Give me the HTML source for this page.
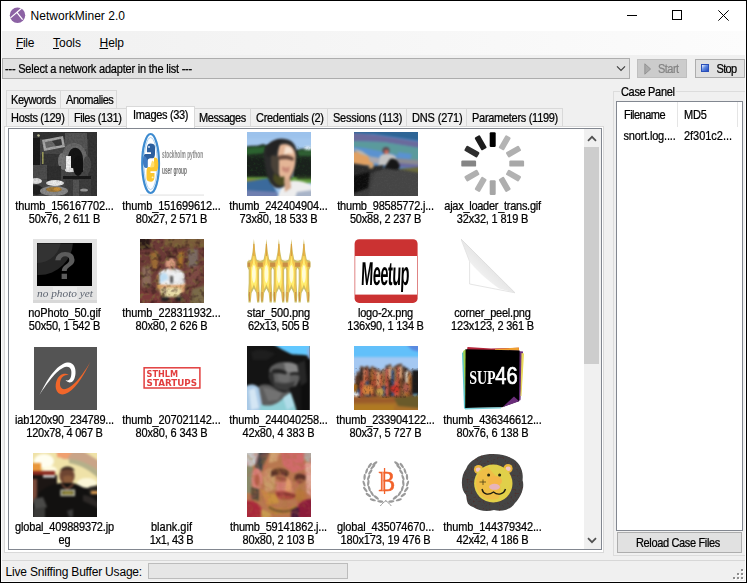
<!DOCTYPE html>
<html lang="en">
<head>
<meta charset="utf-8">
<title>NetworkMiner 2.0</title>
<style>
html,body{margin:0;padding:0;}
body{width:747px;height:583px;overflow:hidden;background:#f0f0f0;position:relative;
  font-family:"Liberation Sans",sans-serif;font-size:11px;color:#000;}
#win{position:absolute;left:0;top:0;width:747px;height:583px;background:#f0f0f0;overflow:hidden;}
.abs{position:absolute;}
.t{position:absolute;white-space:nowrap;line-height:13px;height:13px;}
.ui{font-family:"Liberation Sans",sans-serif;font-size:12px;line-height:14px;height:14px;}
/* frame */
#bt{left:0;top:0;width:747px;height:1px;background:#000;}
#bl{left:0;top:0;width:1px;height:583px;background:#000;}
#br{left:746px;top:0;width:1px;height:583px;background:#000;}
#bb{left:0;top:582px;width:747px;height:1px;background:#000;}
#title{left:1px;top:1px;width:745px;height:30px;background:#fff;}
#menu{left:1px;top:31px;width:745px;height:24px;background:linear-gradient(to right,#f0f0f0,#fcfcfc);}
#combo{left:2px;top:58px;width:626px;height:19px;background:#e1e1e1;border:1px solid #adadad;}
.btn{position:absolute;background:#e1e1e1;border:1px solid #adadad;box-sizing:border-box;}
.tab{position:absolute;box-sizing:border-box;height:18px;background:#f0f0f0;border:1px solid #d9d9d9;border-left:none;border-bottom:none;}
.tab span{position:absolute;left:5px;top:3px;white-space:nowrap;line-height:13px;}
#page{left:4px;top:126px;width:600px;height:427px;background:#fff;border:1px solid #d9d9d9;box-sizing:border-box;}
#lv{left:8px;top:128px;width:594px;height:422px;background:#fff;border:1px solid #828790;box-sizing:border-box;}
.cell{position:absolute;width:107px;height:107px;}
.cell svg{position:absolute;left:21px;top:0;width:64px;height:64px;display:block;}
.cell .l1,.cell .l2{position:absolute;left:-11px;width:127px;text-align:center;white-space:nowrap;line-height:13px;height:13px;}
.cell .l1{top:68px;}
.cell .l2{top:81px;}
.t:not(.ui),.tab span,.cell .l1,.cell .l2{transform:scaleY(1.09);transform-origin:0 10.1px;-webkit-text-stroke:0.22px currentColor;}
#b2{letter-spacing:-0.14px}
#b6{letter-spacing:-0.14px}
#b11{letter-spacing:-0.14px}
#b12{letter-spacing:-0.14px}
#b13{letter-spacing:-0.14px}
#b14{letter-spacing:-0.14px}
#b15{letter-spacing:-0.14px}
#b17{letter-spacing:-0.14px}
#b19{letter-spacing:-0.14px}
#ttl{letter-spacing:0.029px}
#m1{letter-spacing:-0.340px}
#m2{letter-spacing:-0.003px}
#m3{letter-spacing:-0.047px}
#st{letter-spacing:-0.191px}
#cb{letter-spacing:-0.210px}
#bs{letter-spacing:-0.527px}
#bp{letter-spacing:-0.635px}
#seltab{letter-spacing:-0.318px}
#cp{letter-spacing:-0.327px}
#h1{letter-spacing:-0.531px}
#h2{letter-spacing:-0.211px}
#r1{letter-spacing:-0.186px}
#r2{letter-spacing:-0.033px}
#rl{letter-spacing:-0.346px}
#tb0{letter-spacing:-0.450px}
#tb1{letter-spacing:-0.440px}
#tb2{letter-spacing:-0.305px}
#tb3{letter-spacing:-0.415px}
#tb4{letter-spacing:-0.405px}
#tb5{letter-spacing:-0.296px}
#tb6{letter-spacing:-0.247px}
#tb7{letter-spacing:-0.152px}
#tb8{letter-spacing:-0.288px}
#a0{letter-spacing:-0.140px}
#a1{letter-spacing:-0.140px}
#a2{letter-spacing:-0.140px}
#a6{letter-spacing:-0.095px}
#a11{letter-spacing:-0.095px}
#a12{letter-spacing:-0.140px}
#a13{letter-spacing:-0.140px}
#a14{letter-spacing:-0.140px}
#a19{letter-spacing:-0.140px}
#a3{letter-spacing:-0.195px}
#a17{letter-spacing:-0.185px}
#a4{letter-spacing:-0.273px}
#a5{letter-spacing:-0.123px}
#a7{letter-spacing:-0.102px}
#a8{letter-spacing:-0.227px}
#a9{letter-spacing:-0.208px}
#a10{letter-spacing:-0.209px}
#a15{letter-spacing:-0.177px}
#a16{letter-spacing:0.002px}
#a18{letter-spacing:-0.133px}
#b0{letter-spacing:-0.135px}
#b1{letter-spacing:-0.194px}
#b3{letter-spacing:-0.208px}
#b4{letter-spacing:-0.180px}
#b5{letter-spacing:-0.180px}
#b7{letter-spacing:-0.320px}
#b8{letter-spacing:-0.255px}
#b9{letter-spacing:-0.216px}
#b10{letter-spacing:-0.255px}
#b16{letter-spacing:-0.343px}
#b18{letter-spacing:-0.139px}
</style>
</head>
<body>
<div id="win">
  <div id="title" class="abs"></div>
  <svg class="abs" style="left:9px;top:7px" width="17" height="17" viewBox="0 0 17 17">
    <circle cx="8.5" cy="8.25" r="7.7" fill="#8c62a4"/>
    <path d="M12.6 1.3 L1.5 10.9 M7.9 5.3 L13.6 12.7" stroke="#fff" stroke-width="1.25" fill="none"/>
  </svg>
  <div class="t ui" style="left:30.5px;top:9px;" id="ttl">NetworkMiner 2.0</div>
  <!-- window controls -->
  <div class="abs" style="left:627px;top:15px;width:10px;height:1px;background:#000"></div>
  <div class="abs" style="left:672px;top:10px;width:8px;height:8px;border:1px solid #000"></div>
  <svg class="abs" style="left:718px;top:10px" width="11" height="11" viewBox="0 0 11 11"><path d="M0.35 0.35 L10.65 10.65 M10.65 0.35 L0.35 10.65" stroke="#000" stroke-width="1" fill="none"/></svg>

  <div id="menu" class="abs"></div>
  <div class="t ui" style="left:16px;top:36px;" id="m1"><u>F</u>ile</div>
  <div class="t ui" style="left:53px;top:36px;" id="m2"><u>T</u>ools</div>
  <div class="t ui" style="left:99.5px;top:36px;" id="m3"><u>H</u>elp</div>

  <!-- toolbar -->
  <div id="combo" class="abs"></div>
  <div class="t" style="left:5px;top:63px;" id="cb">--- Select a network adapter in the list ---</div>
  <svg class="abs" style="left:616px;top:65px" width="10" height="7" viewBox="0 0 10 7"><path d="M1 1.4 L5 5.5 L9 1.4" stroke="#3c3c3c" stroke-width="1.1" fill="none"/></svg>
  <div class="btn" style="left:637px;top:59px;width:50px;height:19px;background:#cccccc;border-color:#bfbfbf"></div>
  <svg class="abs" style="left:644px;top:63px" width="8" height="12" viewBox="0 0 8 12"><path d="M0.8 0.8 L6.6 6 L0.8 11.2 Z" fill="#a9a9a9" stroke="#8a8a8a" stroke-width="0.8"/></svg>
  <div class="t" style="left:658px;top:63px;color:#838383" id="bs">Start</div>
  <div class="btn" style="left:695px;top:59px;width:50px;height:19px;"></div>
  <div class="abs" style="left:701px;top:64px;width:8px;height:8px;background:linear-gradient(135deg,#e4ecfc 5%,#5f8ae0 45%,#2448c0);border:1px solid #2a4fb8;box-sizing:border-box"></div>
  <div class="t" style="left:716.5px;top:63px;" id="bp">Stop</div>

  <!-- tabs row 1 -->
  <div class="tab" style="left:6px;top:90px;width:55px;border-left:1px solid #d9d9d9"><span id="tb0" style="left:4px">Keywords</span></div>
  <div class="tab" style="left:61px;top:90px;width:56px;"><span id="tb1">Anomalies</span></div>
  <!-- tabs row 2 -->
  <div class="tab" style="left:6px;top:108px;width:63px;border-left:1px solid #d9d9d9"><span id="tb2" style="left:4px">Hosts (129)</span></div>
  <div class="tab" style="left:69px;top:108px;width:58px;"><span id="tb3">Files (131)</span></div>
  <div class="tab" style="left:194px;top:108px;width:57px;"><span id="tb4">Messages</span></div>
  <div class="tab" style="left:251px;top:108px;width:77px;"><span id="tb5">Credentials (2)</span></div>
  <div class="tab" style="left:328px;top:108px;width:79px;"><span id="tb6">Sessions (113)</span></div>
  <div class="tab" style="left:407px;top:108px;width:60px;"><span id="tb7">DNS (271)</span></div>
  <div class="tab" style="left:467px;top:108px;width:96px;"><span id="tb8">Parameters (1199)</span></div>

  <div id="page" class="abs"></div>
  <div class="abs" style="left:126px;top:106px;width:69px;height:22px;background:#fff;border:1px solid #d9d9d9;border-bottom:none;box-sizing:border-box"></div>
  <div class="t" style="left:133px;top:109px;" id="seltab">Images (33)</div>

  <div id="lv" class="abs"></div>

  <!-- CELLS -->
  <div id="cells" class="abs" style="left:0;top:0;width:584px;height:549px;overflow:hidden">
<div class="cell" style="left:12px;top:132px">
<svg viewBox="0 0 64 64" width="64" height="64"><defs><filter color-interpolation-filters="sRGB" id="fb0" x="-10%" y="-10%" width="120%" height="120%"><feGaussianBlur stdDeviation="0.7"/></filter>
<filter color-interpolation-filters="sRGB" id="fn0" x="0" y="0" width="100%" height="100%"><feTurbulence type="fractalNoise" baseFrequency="0.55" numOctaves="2" seed="3" result="t"/><feColorMatrix in="t" type="matrix" values="0 0 0 0 0  0 0 0 0 0  0 0 0 0 0  1.6 0 0 0 -0.55"/></filter>
<clipPath id="fc0"><rect width="64" height="64"/></clipPath></defs>
<g clip-path="url(#fc0)">
<rect width="64" height="64" fill="#474747"/>
<g filter="url(#fb0)">
<rect x="0" y="0" width="64" height="7" fill="#333"/>
<rect x="32" y="1" width="22" height="16" fill="#555"/>
<rect x="55" y="0" width="9" height="64" fill="#353535"/>
<rect x="0" y="6" width="7" height="28" fill="#1c1c1c"/>
<polygon points="9,8 30,4 32,15 11,19" fill="#a8a8a8"/>
<polygon points="12,10 28,7 29,13 13,16" fill="#6a6a6a"/>
<polygon points="19,9 28,7 29,13 23,14" fill="#3a3a3a"/>
<path d="M29 26 C29 6 53 6 54 26 L54 38 L29 38 Z" fill="#6a6a6a"/>
<path d="M35 27 C35 12 49 12 50 27 L50 40 L35 40 Z" fill="#151515"/>
<rect x="8" y="22" width="20" height="12" fill="#363636"/>
<ellipse cx="29" cy="29" rx="4" ry="8" fill="#777"/>
<rect x="33" y="24" width="5" height="13" fill="#f2f2f2"/>
<ellipse cx="37" cy="38" rx="5" ry="2.2" fill="#e8e8e8"/>
<ellipse cx="45" cy="34" rx="5" ry="10" fill="#111"/>
<ellipse cx="54" cy="33" rx="4" ry="9" fill="#4a4a4a"/>
<rect x="14" y="34" width="14" height="16" fill="#303030"/>
<rect x="0" y="33" width="14" height="14" fill="#4e4e4e"/>
<rect x="30" y="44" width="28" height="3" fill="#1a1a1a"/>
<rect x="32" y="47" width="26" height="17" fill="#3e3e3e"/>
<rect x="40" y="48" width="6" height="16" fill="#555"/>
<ellipse cx="3" cy="49" rx="6" ry="3" fill="#e0e0e0"/>
<ellipse cx="3" cy="58" rx="7" ry="5" fill="#222"/>
<ellipse cx="22" cy="51" rx="9" ry="3" fill="#ededed"/>
<ellipse cx="21" cy="59" rx="14" ry="5" fill="#8a8a8a"/>
<ellipse cx="21" cy="57.5" rx="8" ry="2.6" fill="#a07a3a"/>
<ellipse cx="24" cy="57" rx="3.4" ry="1.8" fill="#c8903a"/>
<ellipse cx="51" cy="58" rx="4" ry="1.6" fill="#9a9a9a"/>
<rect x="9" y="20" width="1.6" height="12" fill="#9a9a5a"/>
<circle cx="5.5" cy="3.5" r="1.2" fill="#c8c8a0"/>
</g>
<rect width="64" height="64" fill="#000" filter="url(#fn0)" opacity="0.18"/>
</g></svg>
<div class="l1" id="a0">thumb_156167702...</div><div class="l2" id="b0">50x76, 2 611 B</div></div>
<div class="cell" style="left:119px;top:132px">
<svg viewBox="0 0 64 64" width="64" height="64"><defs><filter color-interpolation-filters="sRGB" id="fb1" x="-10%" y="-10%" width="120%" height="120%"><feGaussianBlur stdDeviation="0.45"/></filter></defs>
<rect width="64" height="64" fill="#fff"/>
<g filter="url(#fb1)">
<ellipse cx="10.6" cy="31.5" rx="8.4" ry="29.5" fill="none" stroke="#3d8bd0" stroke-width="2.2"/>
<ellipse cx="10.6" cy="31.5" rx="6.6" ry="26" fill="none" stroke="#9cc6ea" stroke-width="0.8"/>
<g transform="translate(0,30.6) scale(1,0.87) translate(0,-32)"><path d="M10.5 10 C6.5 10 7 16 7 20 L11 20 L11 22 L5.5 22 C3 22 3 30 3.5 34 C4 38 6 38 7.5 38 L7.5 31 C7.5 28 9 27 10.5 27 L13 27 C14.5 27 15 24 15 21 L15 14 C15 11 13 10 10.5 10 Z" fill="#2b5f9e"/>
<path d="M4 24 C3 28 3 36 5 38 L7.5 38 L7.5 30 C7 27 6 25 4 24Z" fill="#3f7cc4"/>
<path d="M11 54 C15 54 14.5 48 14.5 44 L10.5 44 L10.5 42 L16 42 C18.5 42 18.5 34 18 30 C17.5 26 15.5 26 14 26 L14 32 C14 35 12.5 37 11 37 L8.5 37 C7 37 6.5 40 6.5 43 L6.5 50 C6.5 53 8.5 54 11 54 Z" fill="#fbc730"/>
<path d="M12 30 C14 30 15 33 14 37 L10 38 Z" fill="#ffdf70"/>
<circle cx="9" cy="14" r="1" fill="#dfeaf6"/>
<circle cx="12.6" cy="49" r="1" fill="#fff3c0"/></g>
<rect x="0" y="62.6" width="64" height="0.9" fill="#dcdcdc"/>
</g>
<g fill="#8a8a8a" font-family="Liberation Sans, sans-serif" font-weight="bold" filter="url(#fb1)">
<text transform="translate(22,26) scale(0.77,1.75)" font-size="6.2">stockholm python</text>
<text transform="translate(22,41.5) scale(0.77,1.75)" font-size="6.2" fill="#6e6e6e">user group</text>
</g></svg>
<div class="l1" id="a1">thumb_151699612...</div><div class="l2" id="b1">80x27, 2 571 B</div></div>
<div class="cell" style="left:226px;top:132px">
<svg viewBox="0 0 64 64" width="64" height="64"><defs><filter color-interpolation-filters="sRGB" id="fb2" x="-10%" y="-10%" width="120%" height="120%"><feGaussianBlur stdDeviation="0.8"/></filter>
<clipPath id="fc2"><rect width="64" height="64"/></clipPath>
<filter color-interpolation-filters="sRGB" id="fn2" x="0" y="0" width="100%" height="100%"><feTurbulence type="fractalNoise" baseFrequency="0.45" numOctaves="2" seed="11" result="t"/><feColorMatrix in="t" type="matrix" values="0 0 0 0 0.15  0 0 0 0 0.4  0 0 0 0 0.15  2.4 0 0 0 -1.2"/></filter></defs>
<g clip-path="url(#fc2)">
<rect width="64" height="64" fill="#a3c7ee"/>
<g filter="url(#fb2)">
<rect x="-2" y="-2" width="68" height="8" fill="#9cc2ec"/>
<path d="M-2 15 C4 13 10 15 16 12 C20 14 24 12 28 14 L28 48 L-2 48 Z" fill="#1d2a1f"/>
<path d="M46 20 C50 16 56 18 60 15 C62 16 64 15 66 16 L66 48 L46 48 Z" fill="#1e2b20"/>
<path d="M-2 16 C6 14 12 16 18 14 L18 21 L-2 23Z" fill="#2c6230"/>
<path d="M50 19 C56 17 60 18 66 17 L66 24 L52 24Z" fill="#305e34"/>
<ellipse cx="61" cy="16" rx="4" ry="2" fill="#d8e6f4"/>
<rect x="-2" y="26" width="30" height="20" fill="#181e1a"/>
<rect x="46" y="27" width="20" height="20" fill="#1a211c"/>
<rect x="-2" y="45" width="68" height="6" fill="#5f9a3a"/>
<rect x="-2" y="47" width="24" height="4" fill="#8a8a3a"/>
<rect x="50" y="44" width="16" height="3" fill="#2a3a22"/>
<path d="M-2 50 L22 46 L32 64 L-2 66 Z" fill="#3b6a9c"/>
<path d="M-2 58 L30 60 L30 66 L-2 66Z" fill="#6f7fb0"/>
<path d="M36 52 C44 46 56 48 66 54 L66 66 L30 66 Z" fill="#eeeeee"/>
<path d="M50 60 L66 58 L66 66 L48 66Z" fill="#a8b4c8"/>
</g>
<rect y="14" width="64" height="32" filter="url(#fn2)" opacity="0.3"/>
<g filter="url(#fb2)">
<path d="M17 26 C15 12 28 5 38 7 C48 8 52 18 49 28 C50 36 46 44 42 50 C38 56 30 58 26 54 C20 48 18 36 17 26 Z" fill="#2b2b2b"/>
<path d="M19 24 C18 12 28 6 36 7 C32 12 30 18 27 22 C24 24 22 26 19 24Z" fill="#232323"/>
<path d="M33 13 C42 9 50 17 48.5 27 C48.5 36 45 43 41 48 C37 51 33 47 31.5 40 C30 32 30 20 33 13Z" fill="#e4b596"/>
<path d="M38 15 C42 13 46 16 46 22 C44 21 40 21 37 23Z" fill="#f6e2d0"/>
<path d="M31 24 C37 22 43 23 47 26 L46 29 C42 27 36 27 31 28Z" fill="#6a4a3c"/>
<path d="M35 34 C38 36 41 36 43 34 L42 40 C39 41 37 40 35 38Z" fill="#c98a78"/>
<path d="M24 24 C27 23 30 24 32 26 L32 42 C29 44 26 40 24 34Z" fill="#4a4238"/>
<path d="M27 41 C31 45 35 46 37 44 L38 52 C34 56 28 52 26 47Z" fill="#4a4a22"/>
<path d="M37 48 C40 47 42 46 43 45 L44 56 L38 60 Z" fill="#d4a88c"/>
</g>
</g></svg>
<div class="l1" id="a2">thumb_242404904...</div><div class="l2" id="b2">73x80, 18 533 B</div></div>
<div class="cell" style="left:333px;top:132px">
<svg viewBox="0 0 64 64" width="64" height="64"><defs><filter color-interpolation-filters="sRGB" id="fb3" x="-10%" y="-10%" width="120%" height="120%"><feGaussianBlur stdDeviation="0.8"/></filter>
<clipPath id="fc3"><rect width="64" height="64"/></clipPath>
<filter color-interpolation-filters="sRGB" id="fn3" x="0" y="0" width="100%" height="100%"><feTurbulence type="fractalNoise" baseFrequency="0.6" numOctaves="2" seed="5" result="t"/><feColorMatrix in="t" type="matrix" values="0 0 0 0 0.45  0 0 0 0 0.45  0 0 0 0 0.45  2 0 0 0 -0.9"/></filter></defs>
<g clip-path="url(#fc3)">
<rect width="64" height="64" fill="#3a3a3a"/>
<g filter="url(#fb3)">
<rect x="-2" y="-2" width="68" height="40" fill="#5a8fcb"/>
<path d="M-2 -2 L66 -2 L66 9 L20 2 L-2 1Z" fill="#2e6596"/>
<path d="M-2 1 L22 3 L66 10 L66 16 L30 10 L-2 9Z" fill="#6a6a9c"/>
<path d="M-2 9 L30 10 L66 16 L66 30 L40 22 L10 16 L-2 15Z" fill="#5b9a9c"/>
<path d="M-2 15 L10 16 L30 20 L30 28 L-2 22Z" fill="#5a92d0"/>
<path d="M44 20 L58 22 L56 28 L44 26Z" fill="#5a92d0"/>
<path d="M40 26 L66 28 L66 34 L40 32Z" fill="#8a8a92"/>
<path d="M44 31 L66 33 L66 36 L44 35Z" fill="#6a6aa0"/>
<path d="M-2 20 C6 19 14 22 18 27 L20 34 L-2 32Z" fill="#e0a062"/>
<path d="M-2 16 L8 19 L16 25 L6 22Z" fill="#b8b4b0"/>
<path d="M14 24 L26 26 L24 32 L16 30Z" fill="#a8a8b0"/>
<path d="M-2 31 L22 35 L44 37 L66 36 L66 66 L-2 66 Z" fill="#3c3c3c"/>
<path d="M-2 33 L20 35 L22 40 L-2 44Z" fill="#2a2a2a"/>
<path d="M-2 44 L16 40 L14 56 L-2 62Z" fill="#0c0c0c"/>
<path d="M22 37 L60 39 L66 42 L66 66 L14 66 Z" fill="#454545"/>
<path d="M44 37 L66 35 L66 41Z" fill="#6a6a3a"/>
<circle cx="32" cy="18.5" r="3.6" fill="#5a4a52"/>
<circle cx="32.5" cy="20" r="2.2" fill="#c86a5a"/>
<path d="M26 24 C30 21 38 21 42 25 L42 32 L24 34 Z" fill="#c4c4c4"/>
<path d="M36 27 C40 25 44 28 46 34 L44 38 L30 36 Z" fill="#161616"/>
<path d="M20 34 L30 33 L28 38 L18 40Z" fill="#2a2a2a"/>
<ellipse cx="17" cy="35" rx="2.5" ry="1.5" fill="#c8a070"/>
</g>
<rect y="36" width="64" height="28" filter="url(#fn3)" opacity="0.16"/>
</g></svg>
<div class="l1" id="a3">thumb_98585772.j...</div><div class="l2" id="b3">50x88, 2 237 B</div></div>
<div class="cell" style="left:440px;top:132px">
<svg viewBox="0 0 64 64" width="64" height="64"><defs><filter color-interpolation-filters="sRGB" id="fb4" x="-10%" y="-10%" width="120%" height="120%"><feGaussianBlur stdDeviation="0.55"/></filter></defs>
<g filter="url(#fb4)" transform="translate(31.7,31.6)">
<rect x="-3" y="-31.4" width="6" height="14.8" rx="1.2" fill="#000"/>
<rect x="-3" y="-31.4" width="6" height="14.8" rx="1.2" fill="#b4b4b4" transform="rotate(30)"/>
<rect x="-3" y="-31.4" width="6" height="14.8" rx="1.2" fill="#b0b0b0" transform="rotate(60)"/>
<rect x="-3" y="-31.4" width="6" height="14.8" rx="1.2" fill="#a8a8a8" transform="rotate(90)"/>
<rect x="-3" y="-31.4" width="6" height="14.8" rx="1.2" fill="#b2b2b2" transform="rotate(120)"/>
<rect x="-3" y="-31.4" width="6" height="14.8" rx="1.2" fill="#aeaeae" transform="rotate(150)"/>
<rect x="-3" y="-31.4" width="6" height="14.8" rx="1.2" fill="#a6a6a6" transform="rotate(180)"/>
<rect x="-3" y="-31.4" width="6" height="14.8" rx="1.2" fill="#b2b2b2" transform="rotate(210)"/>
<rect x="-3" y="-31.4" width="6" height="14.8" rx="1.2" fill="#b0b0b0" transform="rotate(240)"/>
<rect x="-3" y="-31.4" width="6" height="14.8" rx="1.2" fill="#858585" transform="rotate(270)"/>
<rect x="-3" y="-31.4" width="6" height="14.8" rx="1.2" fill="#2e2e2e" transform="rotate(300)"/>
<rect x="-3" y="-31.4" width="6" height="14.8" rx="1.2" fill="#1c1c1c" transform="rotate(330)"/>
</g></svg>
<div class="l1" id="a4">ajax_loader_trans.gif</div><div class="l2" id="b4">32x32, 1 819 B</div></div>
<div class="cell" style="left:12px;top:239px">
<svg viewBox="0 0 64 64" width="64" height="64"><defs><filter color-interpolation-filters="sRGB" id="fb5" x="-10%" y="-10%" width="120%" height="120%"><feGaussianBlur stdDeviation="0.5"/></filter>
<clipPath id="fc5"><rect x="4.4" y="4.4" width="54.4" height="42.2"/></clipPath></defs>
<rect width="64" height="64" fill="#e3e3e3"/>
<rect x="0" y="61" width="64" height="3" fill="#d8d8d8"/>
<rect x="20" y="48" width="24" height="13" fill="#ececec"/>
<g filter="url(#fb5)">
<rect x="4" y="4" width="55" height="43" fill="#000"/>
<g clip-path="url(#fc5)"><circle cx="6" cy="2" r="34" fill="#262626"/><circle cx="4" cy="0" r="24" fill="#333"/></g>
<text x="32" y="40" text-anchor="middle" font-family="Liberation Sans, sans-serif" font-weight="bold" font-size="38" fill="#5c5c5c">?</text>
<text x="32" y="57.5" text-anchor="middle" font-family="Liberation Serif, serif" font-style="italic" font-size="9.5" fill="#5d6470" textLength="56" lengthAdjust="spacingAndGlyphs">no photo yet</text>
</g></svg>
<div class="l1" id="a5">noPhoto_50.gif</div><div class="l2" id="b5">50x50, 1 542 B</div></div>
<div class="cell" style="left:119px;top:239px">
<svg viewBox="0 0 64 64" width="64" height="64"><defs><filter color-interpolation-filters="sRGB" id="fb6" x="-10%" y="-10%" width="120%" height="120%"><feGaussianBlur stdDeviation="0.8"/></filter>
<clipPath id="fc6"><rect width="64" height="64"/></clipPath>
<filter color-interpolation-filters="sRGB" id="fn6" x="0" y="0" width="100%" height="100%"><feTurbulence type="fractalNoise" baseFrequency="0.2" numOctaves="2" seed="2" result="t"/><feColorMatrix in="t" type="matrix" values="0 0 0 0 0.48  0 0 0 0 0.42  0 0 0 0 0.22  3.2 0 0 0 -1.55"/></filter>
<filter color-interpolation-filters="sRGB" id="fm6" x="0" y="0" width="100%" height="100%"><feTurbulence type="fractalNoise" baseFrequency="0.18" numOctaves="2" seed="9" result="t"/><feColorMatrix in="t" type="matrix" values="0 0 0 0 0.2  0 0 0 0 0.1  0 0 0 0 0.1  3.2 0 0 0 -1.6"/></filter></defs>
<g clip-path="url(#fc6)">
<rect width="64" height="64" fill="#6b3a37"/>
<g filter="url(#fb6)">
<rect x="-2" y="-2" width="12" height="12" fill="#2a1a18"/>
<rect x="24" y="-2" width="42" height="10" fill="#7a5a3a"/>
<path d="M10 14 L18 12 L18 30 L12 30Z" fill="#9a6a34"/>
<path d="M38 14 L44 12 L42 30 L38 28Z" fill="#a8742c"/>
<rect x="2" y="28" width="9" height="20" fill="#8a6a5a"/>
<rect x="48" y="10" width="10" height="18" fill="#7a6a62"/>
<path d="M46 30 L60 26 L60 44 L48 48Z" fill="#7d4a44"/>
<path d="M0 52 L22 56 L20 66 L0 66Z" fill="#7b3a3a"/>
<path d="M52 50 L66 46 L66 66 L50 66Z" fill="#7a6a4a"/>
<ellipse cx="30.5" cy="25" rx="5.2" ry="6.2" fill="#d89a80"/>
<path d="M25 20 C27 15 34 15 36 20 C33 18 28 18 25 20Z" fill="#2a1a14"/>
<path d="M27 27 C29 29 32 29 34 27 L33 32 L28 32Z" fill="#a85a4a"/>
<path d="M19 34 C24 28 38 28 44 34 L45 46 L18 46 Z" fill="#eef0f2"/>
<path d="M20 36 C24 32 28 34 28 40 L20 44Z" fill="#bcdcf2"/>
<path d="M36 36 C40 34 43 38 42 44 L36 42Z" fill="#cfe4f2"/>
<rect x="30.5" y="37" width="2.2" height="7" fill="#2a2a2a"/>
<path d="M28 28 L31 36 L34 28Z" fill="#c4846a"/>
<path d="M18 44 C24 46 38 46 46 44 L44 54 L20 54Z" fill="#d8a070"/>
<path d="M20 50 C26 48 36 48 42 50 L40 58 L22 58Z" fill="#e8dca8"/>
<ellipse cx="25" cy="60" rx="4" ry="2.4" fill="#222"/><ellipse cx="39" cy="60" rx="4" ry="2.4" fill="#222"/>
<path d="M17 36 L20 36 L20 50 L17 50Z" fill="#c89a50"/>
</g>
<rect width="64" height="64" filter="url(#fn6)" opacity="0.7"/>
<rect width="64" height="64" filter="url(#fm6)" opacity="0.6"/>
<g filter="url(#fb6)">
<path d="M20 35 C24 29 38 29 43 35 L44 45 L19 45 Z" fill="#eef0f2" opacity="0.9"/>
<rect x="30.5" y="37" width="2.2" height="7" fill="#2a2a2a"/>
<path d="M20 36 C24 32 28 34 28 40 L20 44Z" fill="#bcdcf2"/>
</g>
</g></svg>
<div class="l1" id="a6">thumb_228311932...</div><div class="l2" id="b6">80x80, 2 626 B</div></div>
<div class="cell" style="left:226px;top:239px">
<svg viewBox="0 0 64 64" width="64" height="64"><defs><filter color-interpolation-filters="sRGB" id="fb7" x="-10%" y="-10%" width="120%" height="120%"><feGaussianBlur stdDeviation="0.6"/></filter>
<g id="star7">
<polygon points="0,0 1.4,13 2.8,20.5 6.6,22.5 6.6,28 5.2,31 5.2,44 5.9,56 5.4,63.5 3.2,63.5 2.3,54 0,49.5 -2.3,54 -3.2,63.5 -5.4,63.5 -5.9,56 -5.2,44 -5.2,31 -6.6,28 -6.6,22.5 -2.8,20.5 -1.4,13" fill="#cdbf68"/>
<polygon points="0,3 0.9,14 2,21.5 5,24.5 5,27 4.1,31 4.1,44 4.8,56 4.5,61 3.6,61 2.7,51 0,46 -2.7,51 -3.6,61 -4.5,61 -4.8,56 -4.1,44 -4.1,31 -5,27 -5,24.5 -2,21.5 -0.9,14" fill="#f3c64f"/>
<polygon points="0,16 1,24 2.9,29 2.9,44 2,50 0,45 -2,50 -2.9,44 -2.9,29 -1,24" fill="#ffee72"/>
<ellipse cx="0" cy="35" rx="1.9" ry="9" fill="#fffcd8"/>
<rect x="-0.5" y="5" width="1" height="12" fill="#d99a3c"/>
<rect x="-4.9" y="53" width="1.1" height="9" fill="#c98f45"/><rect x="3.8" y="53" width="1.1" height="9" fill="#c98f45"/>
</g></defs>
<g filter="url(#fb7)">
<rect x="1.2" y="22.5" width="61.6" height="6.5" fill="#c98f45"/>
<rect x="1" y="20.8" width="62" height="2" fill="#ecd9b0" opacity="0.8"/>
<use href="#star7" x="6.9" y="0"/><use href="#star7" x="19.4" y="0"/><use href="#star7" x="31.9" y="0"/><use href="#star7" x="44.4" y="0"/><use href="#star7" x="56.9" y="0"/>
<g fill="#c98f45"><rect x="10.6" y="23.6" width="5.2" height="4.2"/><rect x="23.1" y="23.6" width="5.2" height="4.2"/><rect x="35.6" y="23.6" width="5.2" height="4.2"/><rect x="48.1" y="23.6" width="5.2" height="4.2"/><rect x="0.6" y="23.6" width="2.6" height="4.2"/><rect x="60.6" y="23.6" width="2.6" height="4.2"/></g>
</g></svg>
<div class="l1" id="a7">star_500.png</div><div class="l2" id="b7">62x13, 505 B</div></div>
<div class="cell" style="left:333px;top:239px">
<svg viewBox="0 0 64 64" width="64" height="64"><defs><filter color-interpolation-filters="sRGB" id="fb8" x="-10%" y="-10%" width="120%" height="120%"><feGaussianBlur stdDeviation="0.35"/></filter></defs>
<g filter="url(#fb8)">
<rect x="0.6" y="0.3" width="63" height="63.6" rx="4.5" fill="#cb3232"/>
<rect x="1.2" y="17" width="61.8" height="38.6" fill="#fff"/>
<text transform="translate(6.8,46.2) scale(0.83,1.9) skewX(-5)" font-family="Liberation Sans, sans-serif" font-weight="bold" font-size="17.5" fill="#000" letter-spacing="-0.6">Meetup</text>
</g></svg>
<div class="l1" id="a8">logo-2x.png</div><div class="l2" id="b8">136x90, 1 134 B</div></div>
<div class="cell" style="left:440px;top:239px">
<svg viewBox="0 0 64 64" width="64" height="64"><defs><filter color-interpolation-filters="sRGB" id="fb9" x="-10%" y="-10%" width="120%" height="120%"><feGaussianBlur stdDeviation="0.4"/></filter>
<linearGradient id="fg9" x1="0" y1="1" x2="1" y2="0"><stop offset="0.3" stop-color="#f4f4f4"/><stop offset="0.62" stop-color="#dfdfdf"/></linearGradient></defs>
<g filter="url(#fb9)">
<path d="M0 0 L54 53.8 L38 49.5 C26 41 14 30 8.6 22.5 Z" fill="url(#fg9)"/>
<path d="M0 0 L8.6 22.5 L8.6 45 L54 53.8" fill="none" stroke="#e2e2e2" stroke-width="0.9"/>
<path d="M0 0 L54 53.8" fill="none" stroke="#dcdcdc" stroke-width="0.9"/>
</g></svg>
<div class="l1" id="a9">corner_peel.png</div><div class="l2" id="b9">123x123, 2 361 B</div></div>
<div class="cell" style="left:12px;top:346px">
<svg viewBox="0 0 64 64" width="64" height="64"><defs><filter color-interpolation-filters="sRGB" id="fb10" x="-10%" y="-10%" width="120%" height="120%"><feGaussianBlur stdDeviation="0.35"/></filter></defs>
<rect x="1" y="1" width="63" height="63" fill="#545454"/>
<g filter="url(#fb10)">
<path d="M6.5 49 C14 34 23 19 34 16.5 C40 15.5 43 21 42.5 27.5 C42 33.5 39.5 36.8 36.5 36.5 C34.5 36.2 33.5 35 32.5 34 C35 35.2 37 34 38 30.5 C39.2 25 38 20.5 33.5 20.8 C25 22 15 36 6.5 49 Z" fill="#fff"/>
<path d="M57.5 15.5 C52 27 44 41 36 46 C30 50 24.5 49 23 43 C21.8 37 24.5 29.5 30 28 C32.5 27.4 34.5 28.2 35.8 29.2 C32.5 28.6 29 30 27.6 34 C26 39 27.5 44 32.5 43 C41 41 51 27 57.5 15.5 Z" fill="#f1662a"/>
</g></svg>
<div class="l1" id="a10">iab120x90_234789...</div><div class="l2" id="b10">120x78, 4 067 B</div></div>
<div class="cell" style="left:119px;top:346px">
<svg viewBox="0 0 64 64" width="64" height="64"><defs><filter color-interpolation-filters="sRGB" id="fb11" x="-10%" y="-10%" width="120%" height="120%"><feGaussianBlur stdDeviation="0.3"/></filter></defs>
<g filter="url(#fb11)">
<rect x="4.1" y="21.8" width="55.8" height="20.2" fill="#fff" stroke="#e23e3e" stroke-width="1.5"/>
<g font-family="DejaVu Sans, Liberation Sans, sans-serif" font-weight="bold" fill="#e23e3e" font-size="8.4">
<text x="6.6" y="31.4" textLength="31.5" lengthAdjust="spacingAndGlyphs">STHLM</text>
<text x="6.6" y="39.8" textLength="50.5" lengthAdjust="spacingAndGlyphs">STARTUPS</text>
</g></g></svg>
<div class="l1" id="a11">thumb_207021142...</div><div class="l2" id="b11">80x80, 6 343 B</div></div>
<div class="cell" style="left:226px;top:346px">
<svg viewBox="0 0 64 64" width="64" height="64"><defs><filter color-interpolation-filters="sRGB" id="fb12" x="-10%" y="-10%" width="120%" height="120%"><feGaussianBlur stdDeviation="0.9"/></filter>
<clipPath id="fc12"><rect width="63" height="64"/></clipPath></defs>
<g clip-path="url(#fc12)">
<rect width="64" height="64" fill="#141414"/>
<g filter="url(#fb12)">
<path d="M26 -2 L66 -2 L66 12 C58 7 50 10 44 8 C38 5 32 2 26 -2Z" fill="#62c8ff"/>
<path d="M60 2 L66 2 L66 14 L61 12Z" fill="#8ab4e8"/>
<path d="M4 6 C12 2 22 4 28 8 L20 14 L6 14Z" fill="#1e1e1e"/>
<path d="M23 22 C27 15 44 14 51 19 C55 24 54 33 49 40 C44 46 33 46 27 40 C22 35 21 28 23 22Z" fill="#5e5e5e"/>
<path d="M37 17 C44 15 51 18 53 24 L49 27 L39 26Z" fill="#858585"/>
<path d="M30 27 C34 25 40 26 44 28 L42 36 C38 37 34 36 31 34Z" fill="#6c6c6c"/>
<path d="M25 24 C30 22 36 23 40 26 L39 28.5 C34 27 29 27 25 27.5Z" fill="#222"/>
<path d="M43 27 C46 25.5 50 25.5 53 27 L52 29.5 C49 28.6 46 28.6 43 29.5Z" fill="#262626"/>
<path d="M28 36 C34 38 42 38 48 35 L46 42 C40 46 32 45 28 41Z" fill="#3c3c3c"/>
<path d="M22 26 L26 26 L28 40 L24 38Z" fill="#2e2e2e"/>
<path d="M12 40 C18 37 25 39 29 43 C35 47 40 47 43 44 L40 56 L22 62 L12 56 Z" fill="#5c5c5c"/>
<path d="M16 42 C21 41 28 45 35 47 L31 54 L21 55Z" fill="#727272"/>
<path d="M-2 41 C3 37 9 38 12 42 L15 58 L20 66 L-2 66Z" fill="#a9c9e6"/>
<path d="M2 44 L8 42 L12 62 L4 64Z" fill="#d4e6f4"/>
<path d="M14 58 C22 62 32 58 38 50 L46 46 L50 66 L12 66Z" fill="#8fcfd6"/>
<path d="M36 52 L44 46 L47 60 L40 64Z" fill="#b0dce8"/>
<path d="M42 42 C50 38 58 42 60 48 L60 66 L50 66 C48 58 45 50 42 42Z" fill="#161616"/>
<rect x="54" y="14" width="10" height="52" fill="#0e0e0e"/>
<path d="M50 18 L58 14 L60 36 L54 40Z" fill="#262626"/>
</g>
<rect x="62" y="0" width="1" height="64" fill="#777" opacity="0.5"/>
</g></svg>
<div class="l1" id="a12">thumb_244040258...</div><div class="l2" id="b12">42x80, 4 383 B</div></div>
<div class="cell" style="left:333px;top:346px">
<svg viewBox="0 0 64 64" width="64" height="64"><defs><filter color-interpolation-filters="sRGB" id="fb13" x="-10%" y="-10%" width="120%" height="120%"><feGaussianBlur stdDeviation="0.9"/></filter>
<clipPath id="fc13"><rect width="64" height="64"/></clipPath>
<filter color-interpolation-filters="sRGB" id="fo13" x="0" y="0" width="100%" height="100%"><feTurbulence type="fractalNoise" baseFrequency="0.45 0.3" numOctaves="2" seed="8" result="t"/><feColorMatrix in="t" type="matrix" values="0 0 0 0 0.2  0 0 0 0 0.12  0 0 0 0 0.08  2.6 0 0 0 -1.3"/></filter></defs>
<g clip-path="url(#fc13)">
<rect width="64" height="64" fill="#62c0fa"/>
<g filter="url(#fb13)">
<rect x="-2" y="11" width="68" height="24" fill="#a4c8f2"/>
<path d="M52 -2 L66 -2 L66 6 L58 4Z" fill="#5a8ae0"/>
<rect x="-2" y="28" width="6" height="10" fill="#c8dcf4"/>
<rect x="1" y="30" width="58" height="23" fill="#6a4030"/>
<rect x="2.5" y="28.2" width="3.4" height="14.7" fill="#4a3022"/>
<rect x="2.5" y="42.9" width="3.4" height="7.1" fill="#2a4a7a"/>
<circle cx="4.2" cy="26.9" r="1.6" fill="#5a3a2a"/>
<rect x="5.9" y="22.8" width="3.4" height="12.6" fill="#3a2a24"/>
<rect x="5.9" y="35.3" width="3.4" height="14.7" fill="#b84a3a"/>
<circle cx="7.6" cy="21.5" r="1.6" fill="#5a3a2a"/>
<rect x="9.3" y="23.6" width="2.4" height="15.6" fill="#e0784a"/>
<rect x="9.3" y="39.2" width="2.4" height="10.8" fill="#93683c"/>
<circle cx="10.5" cy="22.3" r="1.6" fill="#6a4a38"/>
<rect x="11.7" y="22.7" width="2.8" height="12.4" fill="#a84a30"/>
<rect x="11.7" y="35.1" width="2.8" height="14.9" fill="#2a4a7a"/>
<circle cx="13.1" cy="21.4" r="1.6" fill="#5a3a2a"/>
<rect x="14.5" y="25.1" width="2.4" height="14.6" fill="#5a3a2a"/>
<rect x="14.5" y="39.7" width="2.4" height="10.3" fill="#2a4a7a"/>
<circle cx="15.7" cy="23.8" r="1.6" fill="#40302a"/>
<rect x="16.9" y="22.8" width="2.8" height="12.0" fill="#a8642a"/>
<rect x="16.9" y="34.8" width="2.8" height="15.2" fill="#a84a30"/>
<circle cx="18.3" cy="21.5" r="1.6" fill="#6a4a38"/>
<rect x="19.7" y="24.3" width="3.0" height="16.2" fill="#a84a30"/>
<rect x="19.7" y="40.6" width="3.0" height="9.4" fill="#5a3a2a"/>
<circle cx="21.2" cy="23.0" r="1.6" fill="#5a3a2a"/>
<rect x="22.7" y="25.6" width="3.0" height="14.4" fill="#d8a070"/>
<rect x="22.7" y="40.0" width="3.0" height="10.0" fill="#b84a3a"/>
<circle cx="24.2" cy="24.3" r="1.6" fill="#6a4a38"/>
<rect x="25.7" y="27.4" width="2.4" height="13.3" fill="#c85a3a"/>
<rect x="25.7" y="40.7" width="2.4" height="9.3" fill="#e0784a"/>
<circle cx="26.9" cy="26.1" r="1.6" fill="#6a4a38"/>
<rect x="28.1" y="25.5" width="3.4" height="14.5" fill="#93683c"/>
<rect x="28.1" y="40.0" width="3.4" height="10.0" fill="#2a4a7a"/>
<circle cx="29.8" cy="24.2" r="1.6" fill="#8a6a50"/>
<rect x="31.5" y="22.2" width="3.0" height="14.0" fill="#b84a3a"/>
<rect x="31.5" y="36.2" width="3.0" height="13.8" fill="#d65a4a"/>
<circle cx="33.0" cy="20.9" r="1.6" fill="#3a2a22"/>
<rect x="34.5" y="21.0" width="2.8" height="12.1" fill="#d8a070"/>
<rect x="34.5" y="33.1" width="2.8" height="16.9" fill="#4a3022"/>
<circle cx="35.9" cy="19.7" r="1.6" fill="#6a4a38"/>
<rect x="37.3" y="23.9" width="2.8" height="14.7" fill="#2a4a7a"/>
<rect x="37.3" y="38.5" width="2.8" height="11.5" fill="#2a4a7a"/>
<circle cx="38.7" cy="22.6" r="1.6" fill="#8a6a50"/>
<rect x="40.1" y="22.3" width="2.8" height="12.7" fill="#93683c"/>
<rect x="40.1" y="35.0" width="2.8" height="15.0" fill="#d65a4a"/>
<circle cx="41.5" cy="21.0" r="1.6" fill="#5a3a2a"/>
<rect x="42.9" y="21.0" width="2.4" height="18.0" fill="#b84a3a"/>
<rect x="42.9" y="39.0" width="2.4" height="11.0" fill="#c85a3a"/>
<circle cx="44.1" cy="19.7" r="1.6" fill="#5a3a2a"/>
<rect x="45.3" y="20.3" width="2.8" height="12.3" fill="#d8a070"/>
<rect x="45.3" y="32.5" width="2.8" height="17.5" fill="#7a4a2a"/>
<circle cx="46.7" cy="19.0" r="1.6" fill="#5a3a2a"/>
<rect x="48.1" y="23.0" width="3.4" height="17.0" fill="#5a3a2a"/>
<rect x="48.1" y="40.0" width="3.4" height="10.0" fill="#93683c"/>
<circle cx="49.8" cy="21.7" r="1.6" fill="#3a2a22"/>
<rect x="51.5" y="24.7" width="2.4" height="12.1" fill="#e0d8c8"/>
<rect x="51.5" y="36.8" width="2.4" height="13.2" fill="#c8742a"/>
<circle cx="52.7" cy="23.4" r="1.6" fill="#2a2220"/>
<rect x="53.9" y="26.8" width="3.4" height="17.0" fill="#a8642a"/>
<rect x="53.9" y="43.7" width="3.4" height="6.3" fill="#7a4a2a"/>
<circle cx="55.6" cy="25.5" r="1.6" fill="#6a4a38"/>
<rect x="58" y="24" width="8" height="24" fill="#1a1a1a"/>
<ellipse cx="41" cy="43" rx="4.5" ry="4" fill="#c8342a"/>
<ellipse cx="14" cy="44" rx="6" ry="5" fill="#d0803a"/>
<ellipse cx="26" cy="46" rx="4" ry="4" fill="#c09a4a"/>
<ellipse cx="52" cy="42" rx="3.5" ry="5" fill="#a85a4a"/>
<ellipse cx="2" cy="50" rx="3" ry="4" fill="#e8e8e8"/>
<rect x="-2" y="51" width="68" height="15" fill="#a8702a"/>
<path d="M-2 50 L30 53 L66 49 L66 56 L-2 57Z" fill="#9a5a2a"/>
<path d="M40 52 L66 49 L66 62 L44 60Z" fill="#6a5a2a"/>
<path d="M-2 59 L40 59 L40 66 L-2 66Z" fill="#b07a22"/>
<rect x="-2" y="38" width="5" height="8" fill="#a86a1a"/>
</g>
<rect y="22" width="64" height="30" filter="url(#fo13)" opacity="0.55"/>
</g></svg>
<div class="l1" id="a13">thumb_233904122...</div><div class="l2" id="b13">80x37, 5 727 B</div></div>
<div class="cell" style="left:440px;top:346px">
<svg viewBox="0 0 64 64" width="64" height="64"><defs><filter color-interpolation-filters="sRGB" id="fb14" x="-10%" y="-10%" width="120%" height="120%"><feGaussianBlur stdDeviation="0.35"/></filter></defs>
<g filter="url(#fb14)">
<polygon points="1,7 5,4 5,62 4,63 3,62" fill="#5cc6d0"/>
<polygon points="2.2,5 5,3 6,60 4.5,61" fill="#9fcf4a"/>
<polygon points="6.5,1 30,2.5 58,1.8 58,4.5 6,4" fill="#b4243a"/>
<polygon points="34,3 57.8,1.6 58,4.5 34,4" fill="#f0a030"/>
<polygon points="57,5 62,5.5 59.5,54 56,56" fill="#6a2d7a"/>
<polygon points="60.5,7 63,7.5 60.5,50 59.5,50" fill="#e8d85a"/>
<polygon points="4.6,3.2 58.6,4.4 58,55 41,61.2 4.2,62" fill="#000"/>
<polygon points="41.5,61.2 53,50.5 58.2,55.2" fill="#6a2d7a"/>
<polygon points="4,62 40,61.2 40,62.6 4,63.6" fill="#5cc6d0" opacity="0.8"/>
<text x="8.2" y="37.6" font-family="Liberation Serif, serif" font-weight="bold" font-size="19" fill="#fff" textLength="26.5" lengthAdjust="spacingAndGlyphs">SUP</text>
<text transform="translate(34.2,37.6) scale(0.84,1)" font-family="Liberation Sans, sans-serif" font-size="24" fill="#fff" stroke="#fff" stroke-width="0.7">46</text>
</g></svg>
<div class="l1" id="a14">thumb_436346612...</div><div class="l2" id="b14">80x76, 6 138 B</div></div>
<div class="cell" style="left:12px;top:453px">
<svg viewBox="0 0 64 64" width="64" height="64"><defs><filter color-interpolation-filters="sRGB" id="fb15" x="-10%" y="-10%" width="120%" height="120%"><feGaussianBlur stdDeviation="0.9"/></filter>
<clipPath id="fc15"><rect width="64" height="64"/></clipPath></defs>
<g clip-path="url(#fc15)">
<rect width="64" height="64" fill="#161412"/>
<g filter="url(#fb15)">
<rect x="-2" y="-2" width="68" height="36" fill="#efe2a8"/>
<path d="M22 -2 L50 -2 L66 8 L66 18 C56 12 44 6 30 6Z" fill="#c9a488"/>
<path d="M36 6 C46 6 58 12 66 18 L66 26 C58 18 48 12 36 10Z" fill="#b4b08a"/>
<path d="M24 -2 L40 -2 L34 6 L24 4Z" fill="#f0a070"/>
<ellipse cx="11" cy="8" rx="10" ry="7" fill="#fffef0"/>
<ellipse cx="17" cy="17" rx="7" ry="4" fill="#fffbe0"/>
<ellipse cx="54" cy="30" rx="10" ry="5" fill="#fbf6d8"/>
<rect x="-2" y="10" width="10" height="10" fill="#e8963a"/>
<rect x="-2" y="18" width="24" height="6" fill="#8a2a1e"/>
<rect x="-2" y="22" width="26" height="18" fill="#1c1614"/>
<rect x="10" y="22" width="12" height="2.5" fill="#d8d8d8"/>
<rect x="-2" y="26" width="6" height="24" fill="#7a4a3a"/>
<path d="M56 34 L66 32 L66 42 L56 42Z" fill="#2a2622"/>
<path d="M58 38 L66 38 L66 41 L58 41Z" fill="#d89a50"/>
<ellipse cx="34" cy="23" rx="7.6" ry="9" fill="#6e4532"/>
<path d="M27 18 C29 12 40 12 42 18 C38 16 31 16 27 18Z" fill="#3a2a22"/>
<path d="M30 24 C33 22 37 22 40 24 L39 30 C36 33 33 33 31 30Z" fill="#8a5a3a"/>
<path d="M8 38 C16 32 24 30 30 30 L40 30 C48 32 56 38 60 46 L66 50 L66 66 L-2 66 L-2 52 Z" fill="#121110"/>
<path d="M28 30 L34 35 L41 30 L40 33 L34 37 L29 33Z" fill="#7a4a38"/>
<rect x="27.5" y="36.5" width="14.5" height="6.6" fill="#c8c8b4"/>
<rect x="29" y="38" width="11.5" height="3.6" fill="#5a5420"/>
<rect x="30.5" y="39" width="8.5" height="1.6" fill="#a89a40"/>
<path d="M0 46 L10 44 L14 54 L2 60Z" fill="#4a4a48"/>
<path d="M0 56 L12 54 L12 66 L0 66Z" fill="#3a3a38"/>
<path d="M50 42 C56 42 62 46 66 50 L66 56 C60 52 54 50 50 48Z" fill="#2c2826"/>
<path d="M34 58 L40 56 L40 64 L36 64Z" fill="#3a3a3a"/>
</g>
</g></svg>
<div class="l1" id="a15">global_409889372.jp</div><div class="l2" id="b15">eg</div></div>
<div class="cell" style="left:119px;top:453px">
<svg viewBox="0 0 64 64" width="64" height="64"></svg>
<div class="l1" id="a16">blank.gif</div><div class="l2" id="b16">1x1, 43 B</div></div>
<div class="cell" style="left:226px;top:453px">
<svg viewBox="0 0 64 64" width="64" height="64"><defs><filter color-interpolation-filters="sRGB" id="fb17" x="-10%" y="-10%" width="120%" height="120%"><feGaussianBlur stdDeviation="1.0"/></filter>
<clipPath id="fc17"><rect width="64" height="64"/></clipPath>
<filter color-interpolation-filters="sRGB" id="fn17" x="0" y="0" width="100%" height="100%"><feTurbulence type="fractalNoise" baseFrequency="0.13" numOctaves="2" seed="6" result="t"/><feColorMatrix in="t" type="matrix" values="0 0 0 0 0.78  0 0 0 0 0.36  0 0 0 0 0.36  3 0 0 0 -1.4"/></filter>
<filter color-interpolation-filters="sRGB" id="fo17" x="0" y="0" width="100%" height="100%"><feTurbulence type="fractalNoise" baseFrequency="0.14" numOctaves="2" seed="12" result="t"/><feColorMatrix in="t" type="matrix" values="0 0 0 0 0.62  0 0 0 0 0.45  0 0 0 0 0.2  3 0 0 0 -1.45"/></filter></defs>
<g clip-path="url(#fc17)">
<rect width="64" height="64" fill="#b87850"/>
<g filter="url(#fb17)">
<path d="M-2 -2 L14 -2 L10 10 L4 14 L-2 12Z" fill="#c6c6c6"/>
<path d="M12 -2 L24 -2 C18 6 16 14 14 20 L8 14 Z" fill="#454545"/>
<path d="M-2 12 L6 14 L4 40 L-2 40Z" fill="#8a8a6a"/>
<path d="M22 -2 L34 -2 L30 8 L22 10Z" fill="#cfa070"/>
<path d="M34 -2 L56 -2 L58 16 L46 20 L36 12Z" fill="#d06a6a"/>
<path d="M56 -2 L66 -2 L66 10 L58 8Z" fill="#b0a8a0"/>
<path d="M58 10 L66 10 L66 44 L60 40Z" fill="#e0a898"/>
<ellipse cx="10" cy="26" rx="5.5" ry="11" fill="#d8847a"/>
<ellipse cx="10" cy="27" rx="2.6" ry="6" fill="#b85a4a"/>
<path d="M4 34 L12 36 L12 48 L4 46Z" fill="#5a4a3a"/>
<path d="M16 20 C20 14 26 14 28 20 L28 36 L18 40Z" fill="#c89a68"/>
<path d="M24 18 C30 14 40 15 42 20 L40 24 C34 20 28 22 24 24Z" fill="#5a3228"/>
<path d="M48 22 C52 20 56 20 59 23 L58 28 C54 25 50 26 47 28Z" fill="#5e3228"/>
<path d="M28 24 C32 22 38 24 40 27 L34 28Z" fill="#8a4a3a"/>
<path d="M48 27 C52 26 55 27 57 29 L52 31Z" fill="#8a4a3a"/>
<path d="M28 28 C34 30 40 30 44 26 L46 40 L30 40Z" fill="#d08070"/>
<path d="M40 24 C44 28 46 34 44 40 L38 38Z" fill="#e09a6a"/>
<path d="M14 36 C20 40 26 42 30 40 L32 50 L20 52Z" fill="#c89040"/>
<path d="M28 39 C36 36 46 40 52 43 C46 47 36 48 30 44Z" fill="#a8443c"/>
<path d="M30 41 C36 40 44 42 50 43.5" stroke="#5a2a22" stroke-width="1" fill="none"/>
<path d="M50 36 C56 36 60 40 60 46 L52 52 L48 44Z" fill="#b8783a"/>
<path d="M18 50 C26 56 38 58 50 52 L46 60 L26 62Z" fill="#b8823a"/>
<path d="M22 54 C30 60 42 60 50 54" stroke="#4a3a2a" stroke-width="1.4" fill="none"/>
<path d="M-2 48 C6 46 12 50 16 58 L18 66 L-2 66Z" fill="#a8283a"/>
<path d="M52 50 C58 46 62 46 66 46 L66 66 L48 66 C50 60 50 54 52 50Z" fill="#8a1c3a"/>
<path d="M14 56 L24 60 L26 66 L14 66Z" fill="#c89a50"/>
<path d="M44 58 L52 54 L52 66 L44 66Z" fill="#4a1a3a"/>
</g>
<rect width="64" height="64" filter="url(#fn17)" opacity="0.3"/>
<rect width="64" height="64" filter="url(#fo17)" opacity="0.3"/>
</g></svg>
<div class="l1" id="a17">thumb_59141862.j...</div><div class="l2" id="b17">80x80, 2 103 B</div></div>
<div class="cell" style="left:333px;top:453px">
<svg viewBox="0 0 64 64" width="64" height="64"><defs><filter color-interpolation-filters="sRGB" id="fb18" x="-10%" y="-10%" width="120%" height="120%"><feGaussianBlur stdDeviation="0.35"/></filter>
<g id="lf18"><ellipse cx="0" cy="0" rx="3.2" ry="1.15" fill="#9a9a9a"/></g>
<g id="half18">
<use href="#lf18" transform="translate(-5.5,48.5) rotate(8)"/>
<use href="#lf18" transform="translate(-9.5,44.5) rotate(40)"/>
<use href="#lf18" transform="translate(-13,46.8) rotate(15)"/>
<use href="#lf18" transform="translate(-13.8,40.5) rotate(58)"/>
<use href="#lf18" transform="translate(-17.5,42) rotate(35)"/>
<use href="#lf18" transform="translate(-16.5,35.5) rotate(75)"/>
<use href="#lf18" transform="translate(-20.5,36.5) rotate(52)"/>
<use href="#lf18" transform="translate(-17.5,30) rotate(95)"/>
<use href="#lf18" transform="translate(-21.8,30.5) rotate(72)"/>
<use href="#lf18" transform="translate(-17.2,24.5) rotate(112)"/>
<use href="#lf18" transform="translate(-21.2,24) rotate(92)"/>
<use href="#lf18" transform="translate(-15.5,19) rotate(125)"/>
<use href="#lf18" transform="translate(-19.2,18) rotate(108)"/>
<use href="#lf18" transform="translate(-13,14) rotate(135)"/>
<use href="#lf18" transform="translate(-16,12.5) rotate(125)"/>
<use href="#lf18" transform="translate(-11,10.5) rotate(140)"/>
<path d="M-0.5 47.5 C2 49 4 51 5.5 53" stroke="#9a9a9a" stroke-width="1" fill="none"/>
</g></defs>
<g filter="url(#fb18)">
<use href="#half18" transform="translate(31.8,0)"/>
<use href="#half18" transform="translate(31.8,0) scale(-1,1)"/>
<text x="24.2" y="37.8" font-family="Liberation Serif, serif" font-size="29" fill="#f2622a" stroke="#f2622a" stroke-width="0.5" textLength="17" lengthAdjust="spacingAndGlyphs">B</text>
<rect x="29.9" y="15" width="1.3" height="26" fill="#f2622a"/>
<rect x="28.6" y="18.5" width="0.6" height="19" fill="#fff"/>
</g></svg>
<div class="l1" id="a18">global_435074670...</div><div class="l2" id="b18">180x173, 19 476 B</div></div>
<div class="cell" style="left:440px;top:453px">
<svg viewBox="0 0 64 64" width="64" height="64"><defs><filter color-interpolation-filters="sRGB" id="fb19" x="-10%" y="-10%" width="120%" height="120%"><feGaussianBlur stdDeviation="0.6"/></filter>
<filter color-interpolation-filters="sRGB" id="fn19" x="0" y="0" width="100%" height="100%"><feTurbulence type="fractalNoise" baseFrequency="0.5" numOctaves="2" seed="7" result="t"/><feColorMatrix in="t" type="matrix" values="0 0 0 0 0.35  0 0 0 0 0.12  0 0 0 0 0.1  2.2 0 0 0 -1.22"/><feComposite in2="SourceGraphic" operator="in"/></filter></defs>
<g filter="url(#fb19)">
<path d="M14 6 C20 0 40 -1 50 5 C58 8 63 18 61.5 27 C64 34 60 44 54 50 C50 57 40 59 33 57 C26 59 18 58 12 54 C5 52 6 46 5 42 C-1 36 0 22 5 16 C7 11 10 8 14 6 Z" fill="#444"/>
<path d="M14 6 C20 0 40 -1 50 5 C58 8 63 18 61.5 27 C64 34 60 44 54 50 C50 57 40 59 33 57 C26 59 18 58 12 54 C5 52 6 46 5 42 C-1 36 0 22 5 16 C7 11 10 8 14 6 Z" fill="#444" filter="url(#fn19)"/>
<circle cx="17.5" cy="16.5" r="4.6" fill="#e9b63c"/><circle cx="47" cy="15.5" r="4.6" fill="#e9b63c"/>
<ellipse cx="17.3" cy="16.8" rx="2.6" ry="2.2" fill="#f0c4c8"/><ellipse cx="47.2" cy="15.8" rx="2.6" ry="2.2" fill="#f0c4c8"/>
<ellipse cx="32.3" cy="30.5" rx="19.2" ry="19" fill="#e2cf48"/>
<ellipse cx="31" cy="30" rx="16" ry="16.5" fill="#efbe46"/>
<path d="M27 13 C36 10 46 16 48 26 C50 36 44 46 36 48 C42 40 40 28 34 22 C31 19 28 16 27 13Z" fill="#e0d04a"/>
<ellipse cx="34" cy="28" rx="7" ry="5" fill="#f5b648"/>
<circle cx="27.6" cy="22" r="1.5" fill="#2a2a10"/><circle cx="38.6" cy="22" r="1.5" fill="#2a2a10"/>
<ellipse cx="33.5" cy="33.8" rx="5.5" ry="3" fill="#e7b4bc"/>
<path d="M21 36 C22 41 27 43 32.5 39 C37 43 43 41 44.5 36" stroke="#1a1a10" stroke-width="1.3" fill="none"/>
<path d="M18.5 29 L25 29 M22 26.5 L22 32" stroke="#3a3010" stroke-width="0.7"/>
</g></svg>
<div class="l1" id="a19">thumb_144379342...</div><div class="l2" id="b19">42x42, 4 186 B</div></div>
  </div>

  <!-- scrollbar -->
  <div class="abs" style="left:584px;top:129px;width:17px;height:420px;background:#f0f0f0"></div>
  <div class="abs" style="left:584px;top:147px;width:15px;height:217px;background:#cdcdcd"></div>
  <svg class="abs" style="left:587px;top:135px" width="10" height="7" viewBox="0 0 10 7"><path d="M1 5.8 L5 1.8 L9 5.8" stroke="#505050" stroke-width="1.7" fill="none"/></svg>
  <svg class="abs" style="left:587px;top:537px" width="10" height="7" viewBox="0 0 10 7"><path d="M1 1.2 L5 5.2 L9 1.2" stroke="#505050" stroke-width="1.7" fill="none"/></svg>

  <!-- Case panel -->
  <div class="abs" style="left:613px;top:91px;width:140px;height:465px;border:1px solid #dcdcdc;box-sizing:border-box"></div>
  <div class="t" style="left:620px;top:86px;background:#f0f0f0;padding:0 1px" id="cp">Case Panel</div>
  <div class="abs" style="left:616px;top:101px;width:127px;height:430px;background:#fff;border:1px solid #828790;box-sizing:border-box"></div>
  <div class="abs" style="left:677px;top:102px;width:1px;height:25px;background:#e5e5e5"></div>
  <div class="abs" style="left:737px;top:102px;width:1px;height:25px;background:#e5e5e5"></div>
  <div class="t" style="left:624px;top:109px;" id="h1">Filename</div>
  <div class="t" style="left:684px;top:109px;" id="h2">MD5</div>
  <div class="t" style="left:623.5px;top:130px;" id="r1">snort.log....</div>
  <div class="t" style="left:684px;top:130px;" id="r2">2f301c2...</div>
  <div class="btn" style="left:617px;top:532px;width:125px;height:21px;"></div>
  <div class="t" style="left:615.5px;top:537px;width:125px;text-align:center" id="rl">Reload Case Files</div>

  <!-- status bar -->
  <div class="abs" style="left:1px;top:560px;width:745px;height:1px;background:#d7d7d7"></div>
  <div class="abs" style="left:1px;top:31px;width:1px;height:551px;background:#fdfdfd"></div>
  <div class="abs" style="left:1px;top:581px;width:745px;height:1px;background:#fbfbfb"></div>
  <div class="t ui" style="left:5.5px;top:565px;" id="st">Live Sniffing Buffer Usage:</div>
  <div class="abs" style="left:148px;top:563px;width:200px;height:16px;background:#e6e6e6;border:1px solid #bcbcbc;box-sizing:border-box"></div>
  <svg class="abs" style="left:732px;top:568px" width="13" height="13" viewBox="0 0 13 13">
    <g fill="#fff"><rect x="10" y="2" width="2" height="2"/><rect x="6" y="6" width="2" height="2"/><rect x="10" y="6" width="2" height="2"/><rect x="2" y="10" width="2" height="2"/><rect x="6" y="10" width="2" height="2"/><rect x="10" y="10" width="2" height="2"/></g>
    <g fill="#8e8e8e"><rect x="9" y="1" width="2" height="2"/><rect x="5" y="5" width="2" height="2"/><rect x="9" y="5" width="2" height="2"/><rect x="1" y="9" width="2" height="2"/><rect x="5" y="9" width="2" height="2"/><rect x="9" y="9" width="2" height="2"/></g>
  </svg>
  <div class="abs" style="left:745px;top:31px;width:1px;height:551px;background:#fdfdfd"></div>

  <div id="bt" class="abs"></div><div id="bl" class="abs"></div><div id="br" class="abs"></div><div id="bb" class="abs"></div>
</div>
</body>
</html>
